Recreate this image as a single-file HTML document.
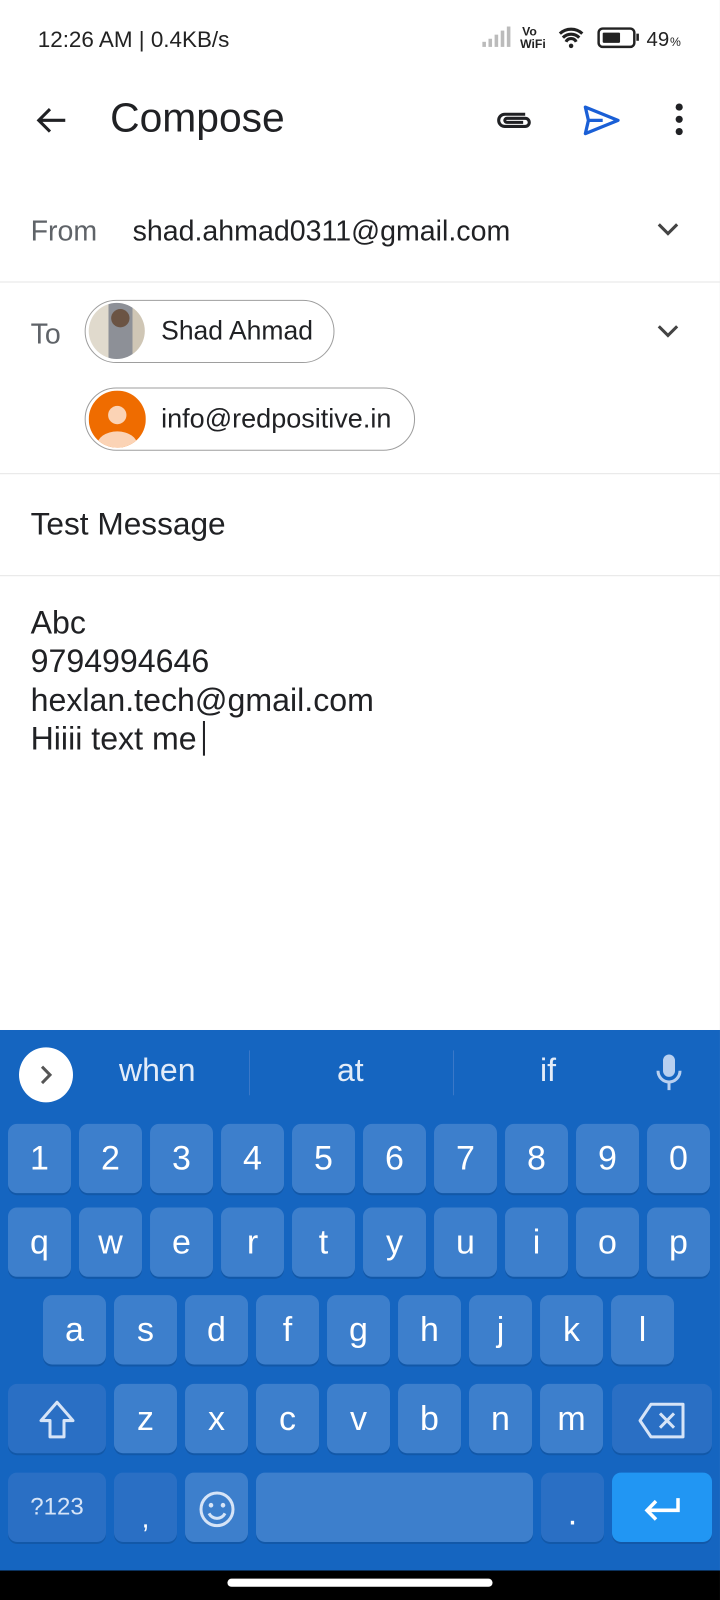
<!DOCTYPE html><html><head><meta charset="utf-8"><style>
*{margin:0;padding:0;box-sizing:border-box}
body{width:720px;height:1600px;background:#000;position:relative;overflow:hidden;font-family:"Liberation Sans",sans-serif;color:#202124}
#w{position:absolute;left:0;top:0;width:706px;height:1569px;transform:scale(1.0198);transform-origin:0 0;background:#fff}
.a{position:absolute}
.hr{position:absolute;left:0;width:706px;height:1px;background:#e6e6e6}
.chip{position:absolute;border:1.5px solid #9e9e9e;border-radius:32px;height:62px;left:83px}
.kb{position:absolute;left:0;top:1010px;width:706px;height:530px;background:#1565c0}
#keys{position:absolute;left:0;top:0;width:720px;height:1569px;transform:scaleX(0.9806);transform-origin:0 0}
.k{position:absolute;height:68px;background:#3d7fcc;border-radius:9px;color:#fff;font-size:34px;text-align:center;line-height:68px;box-shadow:0 2px 0 rgba(0,0,0,.12)}
.d{background:#2a6fc4}
.sg{position:absolute;top:1031px;color:#e3ecf8;font-size:32px}
</style></head><body><div id="w">
<div class="a" style="left:37px;top:26px;font-size:22px;color:#222">12:26 AM | 0.4KB/s</div>
<svg class="a" style="left:470px;top:22px" width="210" height="30" viewBox="0 0 210 30">
<g fill="#bbb"><rect x="3" y="19" width="3.5" height="5"/><rect x="9" y="16" width="3.5" height="8"/><rect x="15" y="12" width="3.5" height="12"/><rect x="21" y="8" width="3.5" height="16"/><rect x="27" y="4" width="3.5" height="20"/></g>
<text x="42" y="13" font-size="12" font-family="Liberation Sans" fill="#222" font-weight="bold">Vo</text><text x="40" y="25" font-size="12" font-family="Liberation Sans" fill="#222" font-weight="bold">WiFi</text>
<path d="M79 11a16 16 0 0 1 22 0M82 15a11 11 0 0 1 16 0M85 19a5.5 5.5 0 0 1 10 0" stroke="#222" stroke-width="3" fill="none"/><circle cx="90" cy="23" r="2.2" fill="#222"/>
<rect x="117" y="6" width="35" height="18" rx="4" fill="none" stroke="#222" stroke-width="2.4"/><rect x="121" y="10" width="17" height="10" rx="1" fill="#222"/><rect x="154" y="11" width="2.5" height="7" fill="#222"/>
<text x="164" y="23" font-size="20" font-family="Liberation Sans" fill="#222">49</text><text x="187" y="23" font-size="12" font-family="Liberation Sans" fill="#222">%</text>
</svg>
<svg class="a" style="left:34px;top:104px" width="32" height="28" viewBox="0 0 32 28"><path d="M30 14H4M15 3L4 14l11 11" stroke="#202124" stroke-width="3" fill="none"/></svg>
<div class="a" style="left:108px;top:94px;font-size:40px">Compose</div>
<svg class="a" style="left:485px;top:104px" width="40" height="28" viewBox="0 0 40 28"><path d="M30 8H10a6 6 0 0 0 0 12h20a4 4 0 0 0 0-8H12a2 2 0 0 0 0 4h16" stroke="#202124" stroke-width="3" fill="none"/></svg>
<svg class="a" style="left:570px;top:102px" width="40" height="32" viewBox="0 0 40 32"><path d="M4 3L36 16 4 29l3-13z M7 16h14" stroke="#1a5fd6" stroke-width="3.2" fill="none" stroke-linejoin="round"/></svg>
<svg class="a" style="left:660px;top:100px" width="12" height="34"><circle cx="6" cy="5" r="3.5" fill="#202124"/><circle cx="6" cy="17" r="3.5" fill="#202124"/><circle cx="6" cy="29" r="3.5" fill="#202124"/></svg>
<div class="a" style="left:30px;top:211px;font-size:28px;color:#5f6368">From</div>
<div class="a" style="left:130px;top:211px;font-size:28px">shad.ahmad0311@gmail.com</div>
<svg class="a" style="left:643px;top:216px" width="24" height="16"><path d="M3 4l9 9 9-9" stroke="#444" stroke-width="3" fill="none"/></svg>
<div class="hr" style="top:276px"></div>
<div class="a" style="left:30px;top:312px;font-size:28px;color:#5f6368">To</div>
<svg class="a" style="left:643px;top:316px" width="24" height="16"><path d="M3 4l9 9 9-9" stroke="#444" stroke-width="3" fill="none"/></svg>
<div class="chip" style="top:294px;width:245px"><div class="a" style="left:3px;top:2px;width:55px;height:55px;border-radius:50%;overflow:hidden;background:linear-gradient(90deg,#e0dacd 0 35%,#8d9097 35% 78%,#cfc6b5 78%)"><div class="a" style="left:22px;top:6px;width:18px;height:18px;border-radius:50%;background:#6b5444"></div></div><div class="a" style="left:74px;top:14px;font-size:26px">Shad Ahmad</div></div>
<div class="chip" style="top:380px;width:324px"><svg class="a" style="left:3px;top:2px" width="56" height="56"><defs><clipPath id="c"><circle cx="28" cy="28" r="28"/></clipPath></defs><circle cx="28" cy="28" r="28" fill="#ef6c00"/><circle cx="28" cy="24" r="9" fill="#fbd3b5"/><ellipse cx="28" cy="54" rx="20" ry="14" fill="#fbd3b5" clip-path="url(#c)"/></svg><div class="a" style="left:74px;top:14px;font-size:26.5px">info@redpositive.in</div></div>
<div class="hr" style="top:464px"></div>
<div class="a" style="left:30px;top:496px;font-size:31px">Test Message</div>
<div class="hr" style="top:564px"></div>
<div class="a" style="left:30px;top:591px;font-size:31.5px;line-height:38px">Abc<br>9794994646<br>hexlan.tech@gmail.com<br>Hiiii text me<span style="display:inline-block;width:2px;height:34px;background:#202124;vertical-align:-6px;margin-left:6px"></span></div>
<div class="kb"></div>
<div id="keys">
<div class="a" style="left:19px;top:1027px;width:54px;height:54px;border-radius:50%;background:#fff"></div>
<svg class="a" style="left:36px;top:1043px" width="20" height="22"><path d="M6 3l8 8-8 8" stroke="#555" stroke-width="3" fill="none"/></svg>
<div class="sg" style="left:119px">when</div><div class="sg" style="left:337px">at</div><div class="sg" style="left:540px">if</div>
<div class="a" style="left:249px;top:1030px;width:1px;height:44px;background:#3a78c8"></div>
<div class="a" style="left:453px;top:1030px;width:1px;height:44px;background:#3a78c8"></div>
<svg class="a" style="left:653px;top:1032px" width="32" height="40"><rect x="10" y="2" width="12" height="22" rx="6" fill="#b8d0f0"/><path d="M5 18a11 11 0 0 0 22 0M16 29v8" stroke="#b8d0f0" stroke-width="3" fill="none"/></svg>
<div class="k" style="left:8px;top:1102px;width:63px">1</div><div class="k" style="left:79px;top:1102px;width:63px">2</div><div class="k" style="left:150px;top:1102px;width:63px">3</div><div class="k" style="left:221px;top:1102px;width:63px">4</div><div class="k" style="left:292px;top:1102px;width:63px">5</div><div class="k" style="left:363px;top:1102px;width:63px">6</div><div class="k" style="left:434px;top:1102px;width:63px">7</div><div class="k" style="left:505px;top:1102px;width:63px">8</div><div class="k" style="left:576px;top:1102px;width:63px">9</div><div class="k" style="left:647px;top:1102px;width:63px">0</div>
<div class="k" style="left:8px;top:1184px;width:63px">q</div><div class="k" style="left:79px;top:1184px;width:63px">w</div><div class="k" style="left:150px;top:1184px;width:63px">e</div><div class="k" style="left:221px;top:1184px;width:63px">r</div><div class="k" style="left:292px;top:1184px;width:63px">t</div><div class="k" style="left:363px;top:1184px;width:63px">y</div><div class="k" style="left:434px;top:1184px;width:63px">u</div><div class="k" style="left:505px;top:1184px;width:63px">i</div><div class="k" style="left:576px;top:1184px;width:63px">o</div><div class="k" style="left:647px;top:1184px;width:63px">p</div>
<div class="k" style="left:43px;top:1270px;width:63px">a</div><div class="k" style="left:114px;top:1270px;width:63px">s</div><div class="k" style="left:185px;top:1270px;width:63px">d</div><div class="k" style="left:256px;top:1270px;width:63px">f</div><div class="k" style="left:327px;top:1270px;width:63px">g</div><div class="k" style="left:398px;top:1270px;width:63px">h</div><div class="k" style="left:469px;top:1270px;width:63px">j</div><div class="k" style="left:540px;top:1270px;width:63px">k</div><div class="k" style="left:611px;top:1270px;width:63px">l</div>
<div class="k d" style="left:8px;top:1357px;width:98px"><svg width="44" height="44" style="vertical-align:middle"><path d="M22 4L6 22h9v16h14V22h9z" stroke="#d6e4f7" stroke-width="3" fill="none" stroke-linejoin="round"/></svg></div>
<div class="k" style="left:114px;top:1357px;width:63px">z</div><div class="k" style="left:185px;top:1357px;width:63px">x</div><div class="k" style="left:256px;top:1357px;width:63px">c</div><div class="k" style="left:327px;top:1357px;width:63px">v</div><div class="k" style="left:398px;top:1357px;width:63px">b</div><div class="k" style="left:469px;top:1357px;width:63px">n</div><div class="k" style="left:540px;top:1357px;width:63px">m</div>
<div class="k d" style="left:612px;top:1357px;width:100px"><svg width="50" height="40" style="vertical-align:middle"><path d="M14 4h32v32H14L3 20z M23 13l14 14M37 13L23 27" stroke="#d6e4f7" stroke-width="3" fill="none" stroke-linejoin="round"/></svg></div>
<div class="k d" style="left:8px;top:1444px;width:98px;font-size:24px;color:#d6e4f7">?123</div>
<div class="k d" style="left:114px;top:1444px;width:63px;font-size:28px;line-height:90px">,</div>
<div class="k" style="left:185px;top:1444px;width:63px"><svg width="40" height="40" style="vertical-align:middle"><circle cx="20" cy="20" r="16" stroke="#d6e4f7" stroke-width="3" fill="none"/><circle cx="14" cy="16" r="2.3" fill="#d6e4f7"/><circle cx="26" cy="16" r="2.3" fill="#d6e4f7"/><path d="M12 24a9 9 0 0 0 16 0" stroke="#d6e4f7" stroke-width="3" fill="none"/></svg></div>
<div class="k" style="left:256px;top:1444px;width:277px"></div>
<div class="k d" style="left:541px;top:1444px;width:63px;line-height:80px">.</div>
<div class="k" style="left:612px;top:1444px;width:100px;background:#2196f3"><svg width="40" height="30" style="vertical-align:middle"><path d="M36 4v12H6M14 7l-9 9 9 9" stroke="#fff" stroke-width="3.5" fill="none"/></svg></div>
</div>
<div class="a" style="left:0;top:1540px;width:706px;height:29px;background:#000"></div>
<div class="a" style="left:223px;top:1548px;width:260px;height:8px;border-radius:4px;background:#fff"></div>
</div></body></html>
